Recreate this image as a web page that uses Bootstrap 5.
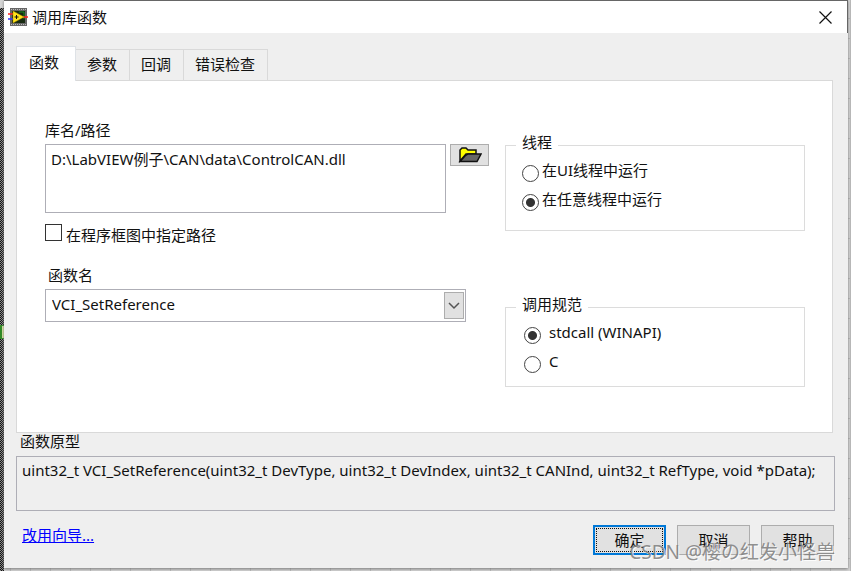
<!DOCTYPE html>
<html lang="zh-CN">
<head>
<meta charset="utf-8">
<meta name="viewport" content="width=device-width, initial-scale=1">
<title>调用库函数</title>
<link href="https://cdn.jsdelivr.net/npm/bootstrap@5.3.0/dist/css/bootstrap.min.css" rel="stylesheet">
<style>
  html, body { height: 100%; }
  body {
    font-family: "Noto Sans", "Noto Sans CJK SC", sans-serif;
    font-size: 15px; line-height: 20px; color: #111;
    background-color: #d6d6d6;
    background-image: linear-gradient(#bbb 1px, transparent 1px), linear-gradient(90deg, #bbb 1px, transparent 1px);
    background-size: 20px 20px; background-position: 10px 18px;
    overflow: hidden;
  }
  .edge-strip { width: 4px; background: repeating-conic-gradient(#111 0 25%, #888 0 50%) 0 0 / 2px 2px; margin-top: 8px; }
  .edge-mark { height: 14px; margin-top: 317px; background: #dfe8a8; border: 1px solid #2f8a24; border-left-width: 2px; border-right: 0; }
  .dialog-window { background: #efefef; border-top: 1px solid #666; margin-right: 3px; margin-bottom: 3px; box-shadow: 0 1px 3px #777; }
  .title-bar { height: 32px; background: #fff; padding: 0 14px 0 4px; border-right: 1px solid #666; }
  .close-btn { width: 16px; height: 16px; }
  .dialog-body { padding: 13px 13px 0 12px; }
  .tab-row { border: 0; align-items: flex-end; }
  .tab-row .nav-link {
    height: 31px; padding: 0 12px 3px 11px; border: 1px solid #d9d9d9; border-left: 0; border-bottom: 0;
    border-radius: 0; color: #111; background: #efefef; margin: 0;
  }
  .tab-row .nav-link.active { height: 35px; padding: 0 16px 5px 12px; border-left: 1px solid #e0e0e0; background: #fff; color: #111; margin-bottom: -1px; position: relative; z-index: 1; }
  .tab-page { background: #fff; border: 1px solid #d9d9d9; margin-right: 2px; height: 353px; padding: 39px 27px 0 28px; }
  .left-col { width: 444px; }
  .path-box, .name-box, .proto-box { border: 1px solid #aeaeb6; border-radius: 0; background: #fff; color: #111; font: inherit; }
  .path-box { width: 403px; height: 69px; padding: 4px 5px; resize: none; overflow: hidden; }
  .browse-btn { width: 39px; height: 22px; background: #e1e1e1; border: 1px solid #adadad; }
  .tick { width: 17px; height: 17px; margin: 0; border: 1px solid #333; border-radius: 0; appearance: none; background: #fff; }
  .tick:checked { background: #333; }
  .tick-row { padding-top: 11px; }
  .tick-row label { padding-top: 1px; }
  .name-label { padding: 20px 0 0 3px; }
  .select-wrap { width: 421px; }
  .name-box { height: 33px; padding: 0 6px 3px; appearance: none; width: 100%; }
  .drop-face { top: 3px; right: 2px; width: 20px; height: 27px; background: #e1e1e1; border: 1px solid #adadad; pointer-events: none; }
  .group-box { border: 1px solid #dcdcdc; padding: 0 16px; min-width: 0; }
  .group-box legend { font-size: 15px; line-height: 20px; width: auto; float: none; margin: 0 0 2px -6px; padding: 0 6px 6px; }
  .thread-box { height: 99px; margin-top: 12px; }
  .call-box { height: 93px; margin-top: 63px; padding-left: 18px; }
  .call-box legend { margin-left: -8px; }
  .dial { width: 17px; height: 17px; margin: 5px 0 0; border: 1px solid #444; border-radius: 50%; appearance: none; background: #fff; flex: none; }
  .dial:checked { background: radial-gradient(circle, #333 0 4px, #fff 5px); }
  .thread-box .option-row { gap: 3px; }
  .option-row { height: 29px; }
  .proto-label { padding-left: 4px; line-height: 16px; margin-bottom: 7px; }
  .proto-box { background: #efefef; height: 55px; padding: 3px 5px; width: 100%; resize: none; overflow: hidden; white-space: nowrap; }
  .foot-row { padding: 14px 1px 0 6px; }
  .wizard-link { color: #00f; }
  .cmd-group { gap: 11px; }
  .cmd-btn { width: 73px; height: 30px; background: #e1e1e1; border: 1px solid #adadad; color: #111; font: inherit; padding: 0; }
  .cmd-btn.primary-cmd { border: 2px solid #0078d7; outline: 1px dotted #111; outline-offset: -4px; }
  .watermark { right: 16px; bottom: 7px; font-size: 19px; line-height: 24px; color: #808080; opacity: .85; text-shadow: 1px 1px 0 #fff; pointer-events: none; white-space: nowrap; }
</style>
</head>
<body class="d-flex position-relative">
<div class="edge-strip flex-shrink-0"><div class="edge-mark"></div></div>
<main class="dialog-window flex-grow-1">
  <header class="title-bar d-flex align-items-center">
    <svg width="20" height="18" viewBox="0 0 20 18" aria-hidden="true">
      <path d="M2 0h17v18H2z" fill="#666"/><path d="M3 1.500h15M3 16.500h15" stroke="#bbb" stroke-dasharray="1 1"/>
      <path d="M4 3h13v12H4z" fill="#182b12"/><path d="M11 4h5v7" fill="none" stroke="#188b20"/>
      <path d="M0 6h5M15 9h5" stroke="#f22" stroke-width="1.500"/><path d="M0 11h5" stroke="#33f" stroke-width="1.500"/>
      <path d="M5 3l11 6-11 6z" fill="#ffe21b" stroke="#b79700" stroke-width=".5"/><path d="M6.500 9h4M8.500 7v4" stroke="#111"/>
    </svg>
    <span class="ms-1">调用库函数</span>
    <button type="button" class="close-btn btn p-0 border-0 ms-auto d-flex align-items-center justify-content-center" aria-label="关闭">
      <svg width="13" height="13" viewBox="0 0 13 13"><path d="M.5.5l12 12M12.500.5l-12 12" stroke="#111" stroke-width="1.200"/></svg>
    </button>
  </header>
  <div class="dialog-body">
    <nav class="tab-row nav nav-tabs">
      <button type="button" class="nav-link active">函数</button>
      <button type="button" class="nav-link">参数</button>
      <button type="button" class="nav-link">回调</button>
      <button type="button" class="nav-link">错误检查</button>
    </nav>
    <section class="tab-page d-flex">
      <div class="left-col flex-shrink-0">
        <label for="path" class="d-block mb-1">库名/路径</label>
        <div class="d-flex align-items-start gap-1">
          <textarea id="path" class="path-box" spellcheck="false">D:\LabVIEW例子\CAN\data\ControlCAN.dll</textarea>
          <button type="button" class="browse-btn p-0 d-flex align-items-center justify-content-center" aria-label="浏览">
            <svg width="24" height="16" viewBox="0 0 24 16"><path d="M2 14V3l2-2h4l2 2h8v4H8z" fill="#ff0" stroke="#111" stroke-width="1.500"/><path d="M2 14.500L7 9l3-2h13l-4 7.500z" fill="#666" stroke="#111" stroke-width="1.500"/></svg>
          </button>
        </div>
        <div class="tick-row d-flex align-items-start gap-1">
          <input type="checkbox" id="diagram" class="tick"><label for="diagram">在程序框图中指定路径</label>
        </div>
        <label for="fname" class="name-label d-block mb-1">函数名</label>
        <div class="select-wrap position-relative">
          <select id="fname" class="name-box"><option>VCI_SetReference</option></select>
          <span class="drop-face position-absolute d-flex align-items-center justify-content-center">
            <svg width="12" height="8" viewBox="0 0 12 8"><path d="M1 1l5 5 5-5" fill="none" stroke="#555" stroke-width="1.500"/></svg>
          </span>
        </div>
      </div>
      <div class="flex-grow-1 ms-3">
        <fieldset class="group-box thread-box">
          <legend>线程</legend>
          <div class="option-row d-flex"><input type="radio" name="thread" id="ui" class="dial"><label for="ui">在UI线程中运行</label></div>
          <div class="option-row d-flex"><input type="radio" name="thread" id="any" class="dial" checked><label for="any">在任意线程中运行</label></div>
        </fieldset>
        <fieldset class="group-box call-box">
          <legend>调用规范</legend>
          <div class="option-row d-flex gap-2"><input type="radio" name="conv" id="std" class="dial" checked><label for="std">stdcall (WINAPI)</label></div>
          <div class="option-row d-flex gap-2"><input type="radio" name="conv" id="c" class="dial"><label for="c">C</label></div>
        </fieldset>
      </div>
    </section>
    <label for="proto" class="proto-label d-block">函数原型</label>
    <textarea id="proto" class="proto-box d-block" readonly spellcheck="false">uint32_t VCI_SetReference(uint32_t DevType, uint32_t DevIndex, uint32_t CANInd, uint32_t RefType, void *pData);</textarea>
    <footer class="foot-row d-flex align-items-start justify-content-between">
      <a href="#" class="wizard-link">改用向导...</a>
      <div class="cmd-group d-flex">
        <button type="button" class="cmd-btn primary-cmd">确定</button>
        <button type="button" class="cmd-btn">取消</button>
        <button type="button" class="cmd-btn">帮助</button>
      </div>
    </footer>
  </div>
</main>
<div class="watermark position-absolute">CSDN @樱の红发小怪兽</div>
<script src="https://cdn.jsdelivr.net/npm/bootstrap@5.3.0/dist/js/bootstrap.bundle.min.js"></script>
</body>
</html>
